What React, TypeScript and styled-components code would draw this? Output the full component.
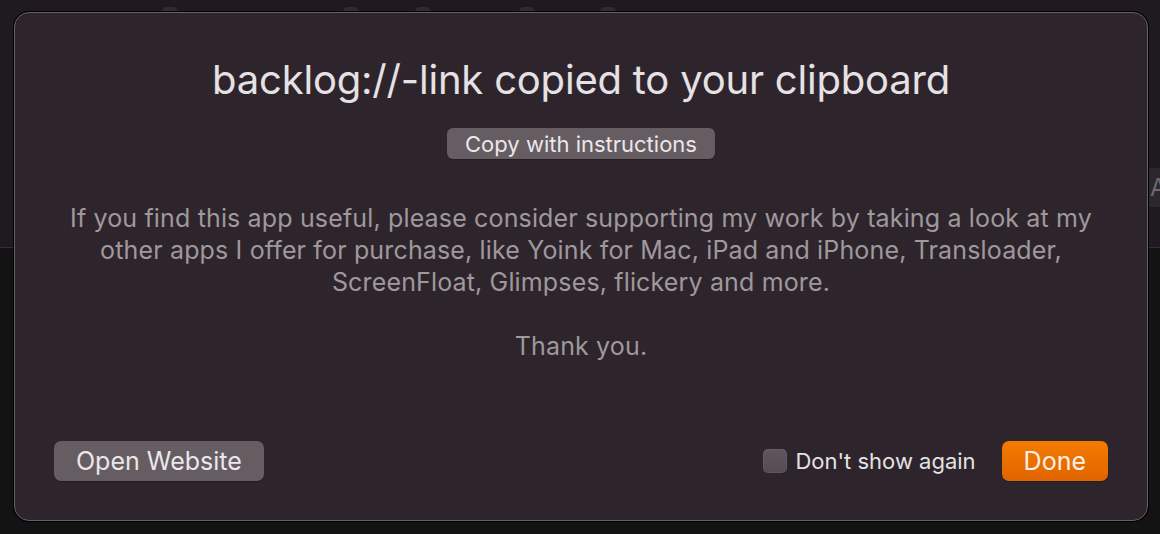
import React from "react";
import styled, { createGlobalStyle } from "styled-components";

const GlobalStyle = createGlobalStyle`
  html, body {
    margin: 0;
    padding: 0;
    background: #141314;
  }
  body {
    font-family: Inter, "Noto Sans", "Liberation Sans", sans-serif;
    -webkit-font-smoothing: antialiased;
  }
`;

const Page = styled.div`
  position: relative;
  width: 1160px;
  height: 534px;
  overflow: hidden;
  display: flex;
  flex-direction: column;
`;

// the window behind the sheet
const BackTop = styled.div`
  height: 247px;
  background: #1f1a1f;
  border-bottom: 1px solid #323032;
  display: flex;
  flex-direction: column;
`;

const TabRow = styled.div`
  display: flex;
  padding-top: 7px;
`;

const TabBump = styled.div<{ $offset: number }>`
  margin-left: ${({ $offset }) => $offset}px;
  width: 16px;
  height: 8px;
  border-radius: 5px 5px 0 0;
  background: #302c30;
`;

const FieldRow = styled.div`
  display: flex;
  justify-content: flex-end;
  margin-top: 153px;
`;

const SearchField = styled.div`
  width: 40px;
  height: 39px;
  background: #2b272b;
  color: #6d696d;
  font-size: 24px;
  line-height: 39px;
  padding-left: 2px;
  box-sizing: border-box;
  margin-right: -28px;
`;

const BackBottom = styled.div`
  flex: 1;
  background: #131313;
`;

const Sheet = styled.div`
  position: absolute;
  left: 14px;
  top: 12px;
  width: 1134px;
  height: 509px;
  box-sizing: border-box;
  background: #2e252c;
  border: 1px solid #676065;
  border-radius: 15px;
  box-shadow: 0 0 0 1px #000;
  display: flex;
  flex-direction: column;
  align-items: center;
  padding: 43px 39px 39px;
`;

const Title = styled.h1`
  margin: 0;
  font-size: 40px;
  line-height: 48px;
  font-weight: 400;
  color: #e5e1e4;
  letter-spacing: -0.2px;
`;

const Button = styled.button<{ $size?: "small" | "large" }>`
  font-family: inherit;
  border: none;
  border-radius: ${({ $size }) => ($size === "small" ? "6px" : "7px")};
  background: #665d63;
  color: #ebe7ea;
  font-size: ${({ $size }) => ($size === "small" ? "22px" : "25px")};
  height: ${({ $size }) => ($size === "small" ? "31px" : "40px")};
  padding: ${({ $size }) => ($size === "small" ? "0 18px" : "0 22px")};
  box-shadow: 0 1px 1px rgba(0, 0, 0, 0.25);
  cursor: pointer;
`;

const DoneButton = styled(Button)`
  background: linear-gradient(#f47b00, #e06400);
  color: #fdf0e6;
`;

const CopyButton = styled(Button)`
  margin-top: 24px;
`;

const Message = styled.div`
  margin-top: 43px;
  font-size: 25px;
  line-height: 32px;
  color: #9f989d;
  text-align: center;
  letter-spacing: 0.15px;
`;

const Paragraph = styled.p`
  margin: 0 0 32px;
`;

const Footer = styled.div`
  margin-top: auto;
  align-self: stretch;
  display: flex;
  align-items: center;
`;

const Spacer = styled.div`
  flex: 1;
`;

const CheckLabel = styled.label`
  display: flex;
  align-items: center;
  gap: 8px;
  font-size: 22px;
  color: #e5e1e4;
  margin-right: 26px;
`;

const CheckBox = styled.span`
  width: 24px;
  height: 24px;
  border-radius: 5px;
  background: linear-gradient(#5e565c, #544c52);
  box-shadow: inset 0 0 0 1px rgba(255, 255, 255, 0.06);
`;

const tabStarts = [162, 343, 415, 519, 600];

export default function App() {
  return (
    <>
      <GlobalStyle />
      <Page>
        <BackTop>
          <TabRow>
            {tabStarts.map((x, i) => (
              <TabBump key={i} $offset={i === 0 ? x : x - tabStarts[i - 1] - 16} />
            ))}
          </TabRow>
          <FieldRow>
            <SearchField>A</SearchField>
          </FieldRow>
        </BackTop>
        <BackBottom />
        <Sheet>
          <Title>backlog://-link copied to your clipboard</Title>
          <CopyButton $size="small">Copy with instructions</CopyButton>
          <Message>
            <Paragraph>
              If you find this app useful, please consider supporting my work by taking a look at my
              <br />
              other apps I offer for purchase, like Yoink for Mac, iPad and iPhone, Transloader,
              <br />
              ScreenFloat, Glimpses, flickery and more.
            </Paragraph>
            <Paragraph>Thank you.</Paragraph>
          </Message>
          <Footer>
            <Button $size="large">Open Website</Button>
            <Spacer />
            <CheckLabel>
              <CheckBox />
              Don't show again
            </CheckLabel>
            <DoneButton $size="large">Done</DoneButton>
          </Footer>
        </Sheet>
      </Page>
    </>
  );
}
